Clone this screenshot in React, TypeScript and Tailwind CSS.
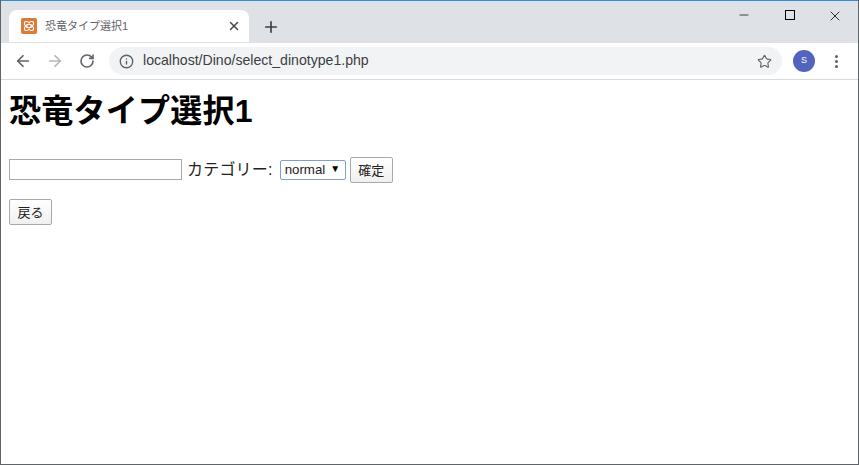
import { ArrowLeft, ArrowRight, RotateCw, Info, Star, Plus, X, Minus } from 'lucide-react';

const sans = "font-['Liberation_Sans','Noto_Sans_CJK_JP',sans-serif]";

function Favicon() {
  return (
    <svg width="16" height="16" viewBox="0 0 16 16">
      <rect width="16" height="16" rx="2" fill="#dd7a33" />
      <path d="M3.5 5 Q3.5 3.5 5 3.5 H6 Q7 3.5 8 5 Q9 3.5 10 3.5 H11 Q12.5 3.5 12.5 5 V6 Q12.5 7 11 8 Q12.5 9 12.5 10 V11 Q12.5 12.5 11 12.5 H10 Q9 12.5 8 11 Q7 12.5 6 12.5 H5 Q3.5 12.5 3.5 11 V10 Q3.5 9 5 8 Q3.5 7 3.5 6 Z M6 6.5 V9.5 H10 V6.5 Z" fill="none" stroke="#fff" strokeWidth="1.2" />
    </svg>
  );
}

function Btn({ label }: { label: string }) {
  return (
    <button className="h-[26px] w-[43px] bg-gradient-to-b from-white to-[#f0f0f0] border border-[#a9a9a9] rounded-[2px] text-[13px] leading-none text-[#222]">
      {label}
    </button>
  );
}

export default function App() {
  return (
    <div className={`${sans} w-[859px] h-[465px] overflow-hidden bg-white border-l border-r border-b border-[#5e6468] flex flex-col`}>
      <div className="h-[43px] bg-[#dee1e6] border-t border-t-[#2f8fd0] flex">
        <div className="w-[240px] h-[32px] mt-[9px] ml-[8px] bg-white rounded-t-lg flex items-center pl-[12px] pr-[8px]">
          <Favicon />
          <span className="ml-[8px] text-[11px] text-[#5f6368] flex-1">恐竜タイプ選択1</span>
          <X size={14} strokeWidth={2.5} className="text-[#45484c]" />
        </div>
        <Plus size={18} strokeWidth={2.2} className="text-[#3c4043] mt-[17px] ml-[13px]" />
        <div className="ml-auto flex h-[28px] items-start">
          <Minus size={14} strokeWidth={1.2} className="text-black mt-[7px] mr-[34px]" />
          <span className="w-[10px] h-[10px] border border-black mt-[9px] mr-[32px]" />
          <X size={16} strokeWidth={1.2} className="text-black mt-[7px] mr-[15px]" />
        </div>
      </div>
      <div className="h-[37px] bg-white border-b border-[#d9dadc] flex items-center">
        <ArrowLeft size={18} strokeWidth={2.3} className="text-[#5f6368] ml-[13px]" />
        <ArrowRight size={18} strokeWidth={2.3} className="text-[#b4b6b9] ml-[14px]" />
        <RotateCw size={16} strokeWidth={2.4} className="text-[#5f6368] ml-[15px]" />
        <div className="ml-[14px] w-[673px] h-[28px] bg-[#f1f3f4] rounded-full flex items-center pl-[10px] pr-[10px]">
          <Info size={15} strokeWidth={2.2} className="text-[#5f6368]" />
          <span className="ml-[9px] text-[14.1px] text-[#3c4043]">localhost/Dino/select_dinotype1.php</span>
          <Star size={15} strokeWidth={1.8} className="text-[#5f6368] ml-auto" />
        </div>
        <div className="ml-[11px] w-[22px] h-[22px] rounded-full bg-[#5463bd] text-white text-[9px] flex items-center justify-center">S</div>
        <div className="ml-[20px] flex flex-col gap-[2px]">
          <span className="w-[3px] h-[3px] rounded-full bg-[#5f6368]" />
          <span className="w-[3px] h-[3px] rounded-full bg-[#5f6368]" />
          <span className="w-[3px] h-[3px] rounded-full bg-[#5f6368]" />
        </div>
      </div>
      <div className="flex-1 pl-[8px] text-black">
        <h1 className="mt-[10px] text-[32px] font-bold leading-[42px] tracking-[0.25px]">恐竜タイプ選択1</h1>
        <div className="mt-[25px] flex items-center h-[26px]">
          <input className="w-[173px] h-[21px] mb-[2px] border border-[#a9a9a9] outline-none" />
          <span className="ml-[5px] mb-[1px] text-[16px] tracking-[0.2px] text-[#222]">カテゴリー:</span>
          <div className="ml-[7px] mb-[1px] w-[66px] h-[20px] border border-[#7f9dd6] rounded-[2px] flex items-center pl-[4px] text-[13.3px] text-[#222]">
            normal
            <span className="ml-[5px] mb-[2px] text-[10px] text-black">▼</span>
          </div>
          <div className="ml-[4px]"><Btn label="確定" /></div>
        </div>
        <div className="mt-[16px]"><Btn label="戻る" /></div>
      </div>
    </div>
  );
}
